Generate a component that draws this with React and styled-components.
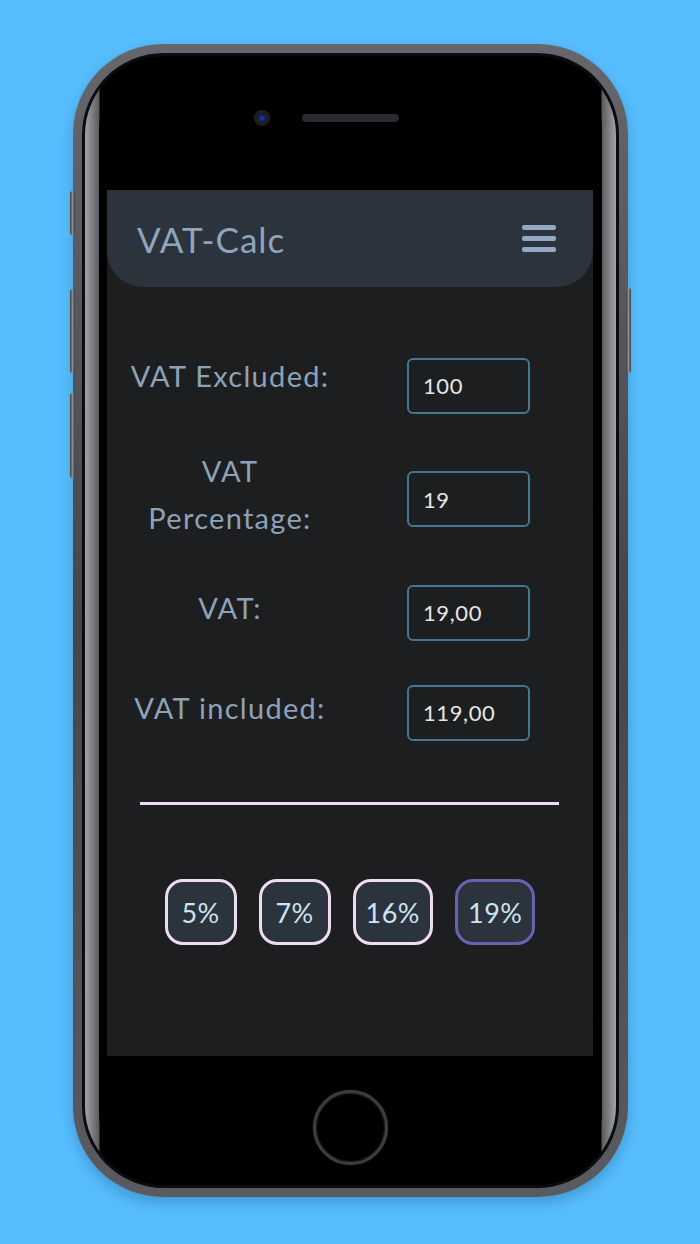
import React, { useState } from "react";
import styled, { createGlobalStyle } from "styled-components";

const GlobalStyle = createGlobalStyle`
  html, body {
    margin: 0;
    padding: 0;
    background: #57befe;
  }
  body {
    font-family: Lato, "Noto Sans", sans-serif;
  }
`;

const Page = styled.div`
  width: 700px;
  height: 1244px;
  box-sizing: border-box;
  padding-top: 44px;
  display: flex;
  justify-content: center;
  align-items: flex-start;
  overflow: hidden;
  background: #57befe;
`;

const Phone = styled.div`
  position: relative;
  width: 555px;
  height: 1153px;
  box-sizing: border-box;
  padding: 9px;
  border-radius: 90px;
  background: linear-gradient(180deg, #66676c 0%, #45464a 50%, #5a5b60 100%);
  box-shadow: 0 6px 14px rgba(0, 40, 80, 0.25);
`;

const SideKey = styled.div`
  position: absolute;
  width: 5px;
  top: ${(p) => p.$top}px;
  height: ${(p) => p.$height}px;
  ${(p) => (p.$right ? "right: -3px;" : "left: -3px;")}
  border-radius: 3px;
  background: linear-gradient(90deg, #3a3b3f, #8a8b90 50%, #3a3b3f);
`;

const Rim = styled.div`
  height: 100%;
  box-sizing: border-box;
  padding: 3px;
  border-radius: 82px;
  background: #0c0c0e;
`;

const Glass = styled.div`
  height: 100%;
  box-sizing: border-box;
  padding: 3px 14px;
  border-radius: 79px;
  background: linear-gradient(
    90deg,
    #a2a3a8 0,
    #5b5c60 14px,
    #000 15px,
    #000 calc(100% - 15px),
    #5b5c60 calc(100% - 14px),
    #a2a3a8 100%
  );
`;

const Face = styled.div`
  height: 100%;
  border-radius: 70px;
  background: #000;
  display: flex;
  flex-direction: column;
  align-items: center;
`;

const TopArea = styled.div`
  height: 131px;
  flex-shrink: 0;
  box-sizing: border-box;
  padding-top: 51px;
  display: flex;
  align-items: flex-start;
  justify-content: center;
`;

const SensorRow = styled.div`
  display: flex;
  align-items: center;
  gap: 32px;
  padding-right: 48px;
  height: 16px;
`;

const Camera = styled.div`
  width: 16px;
  height: 16px;
  border-radius: 50%;
  background: radial-gradient(circle, #2a3f9a 0, #13205a 3px, #1a1b1f 5px, #202126 8px);
`;

const Speaker = styled.div`
  width: 97px;
  height: 8px;
  border-radius: 4px;
  background: #2a2b2f;
`;

const Screen = styled.div`
  width: 486px;
  height: 866px;
  flex-shrink: 0;
  background: #1c1e20;
  display: flex;
  flex-direction: column;
  overflow: hidden;
`;

const Header = styled.header`
  height: 97px;
  flex-shrink: 0;
  box-sizing: border-box;
  padding: 0 37px 0 30px;
  display: flex;
  align-items: center;
  justify-content: space-between;
  background: #2b333c;
  border-radius: 0 0 36px 36px;
`;

const Title = styled.h1`
  margin: 0;
  font-size: 35px;
  font-weight: 400;
  color: #8fa5bd;
  letter-spacing: 1px;
`;

const MenuButton = styled.button`
  width: 34px;
  padding: 0;
  border: none;
  background: none;
  display: flex;
  flex-direction: column;
  gap: 6px;
  cursor: pointer;
`;

const MenuBar = styled.span`
  display: block;
  height: 5px;
  border-radius: 2px;
  background: #93a8c2;
`;

const Form = styled.div`
  padding-top: 65px;
  display: flex;
  flex-direction: column;
`;

const Row = styled.div`
  margin-top: ${(p) => p.$space || 0}px;
  display: grid;
  grid-template-columns: 212px 123px;
  column-gap: 71px;
  padding-left: 17px;
  align-items: center;
`;

const Label = styled.label`
  margin-bottom: ${(p) => p.$lift || 10}px;
  text-align: center;
  font-size: 29px;
  line-height: 47px;
  letter-spacing: 1.3px;
  color: #8da2b9;
`;

const Field = styled.input`
  width: 123px;
  height: 56px;
  box-sizing: border-box;
  padding: 0 14px;
  border: 2px solid #46758f;
  border-radius: 6px;
  background: transparent;
  color: #e6e6e6;
  font-family: Lato, "Noto Sans", sans-serif;
  font-size: 22px;
  letter-spacing: 0.6px;
  outline: none;
`;

const Divider = styled.hr`
  margin: 61px 34px 0 33px;
  border: none;
  height: 3px;
  background: #efdcf2;
`;

const Chips = styled.div`
  margin-top: 74px;
  display: flex;
  justify-content: center;
  gap: 22px;
`;

const Chip = styled.button`
  height: 66px;
  min-width: 72px;
  box-sizing: border-box;
  padding: 0 10px;
  border: 3px solid ${(p) => (p.$active ? "#6a62af" : "#efdcf2")};
  border-radius: 18px;
  background: #2b333c;
  color: #cde4f5;
  font-family: Lato, "Noto Sans", sans-serif;
  font-size: 27px;
  letter-spacing: 0.5px;
  cursor: pointer;
`;

const BottomArea = styled.div`
  flex: 1;
  padding-top: 34px;
  display: flex;
  justify-content: center;
  align-items: flex-start;
`;

const HomeButton = styled.div`
  width: 75px;
  height: 75px;
  box-sizing: border-box;
  border-radius: 50%;
  border: 3px solid #3c3d43;
  box-shadow: inset 0 0 2px rgba(160, 160, 170, 0.5), 0 0 1px rgba(120, 120, 130, 0.6);
  background: #000;
`;

const rates = [5, 7, 16, 19];

export default function App() {
  const [rate, setRate] = useState(19);
  const net = 100;
  const vat = (net * rate) / 100;
  const fmt = (n) => n.toFixed(2).replace(".", ",");

  return (
    <>
      <GlobalStyle />
      <Page>
        <Phone>
          <SideKey $top={147} $height={44} />
          <SideKey $top={245} $height={84} />
          <SideKey $top={349} $height={85} />
          <SideKey $right $top={244} $height={85} />
          <Rim>
            <Glass>
              <Face>
                <TopArea>
                  <SensorRow>
                    <Camera />
                    <Speaker />
                  </SensorRow>
                </TopArea>
                <Screen>
                  <Header>
                    <Title>VAT-Calc</Title>
                    <MenuButton aria-label="Menu">
                      <MenuBar />
                      <MenuBar />
                      <MenuBar />
                    </MenuButton>
                  </Header>
                  <Form>
                    <Row>
                      <Label $lift={20}>VAT Excluded:</Label>
                      <Field defaultValue={net} />
                    </Row>
                    <Row $space={28}>
                      <Label>VAT Percentage:</Label>
                      <Field value={rate} readOnly />
                    </Row>
                    <Row $space={33}>
                      <Label>VAT:</Label>
                      <Field value={fmt(vat)} readOnly />
                    </Row>
                    <Row $space={43}>
                      <Label>VAT included:</Label>
                      <Field value={fmt(net + vat)} readOnly />
                    </Row>
                  </Form>
                  <Divider />
                  <Chips>
                    {rates.map((r) => (
                      <Chip key={r} $active={r === rate} onClick={() => setRate(r)}>
                        {r}%
                      </Chip>
                    ))}
                  </Chips>
                </Screen>
                <BottomArea>
                  <HomeButton />
                </BottomArea>
              </Face>
            </Glass>
          </Rim>
        </Phone>
      </Page>
    </>
  );
}
